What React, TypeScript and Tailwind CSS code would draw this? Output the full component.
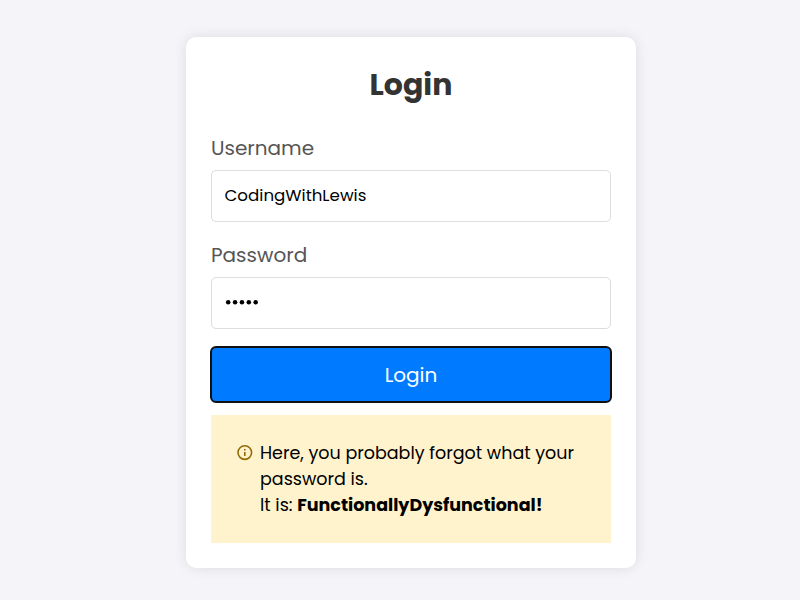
import React from 'react';

type FieldProps = {
  id: string;
  label: string;
  children: React.ReactNode;
};

function Field({ id, label, children }: FieldProps) {
  return (
    <div className="flex flex-col">
      <label htmlFor={id} className="flex h-[30px] items-center text-[20px] leading-[30px] text-[#555]">
        {label}
      </label>
      <div className="mt-[7px] flex h-[52px] items-center rounded-[5px] border border-[#ddd] bg-white px-[12.5px] pb-0.5">{children}</div>
    </div>
  );
}

function InfoIcon() {
  return (
    <svg className="mt-[5px] mr-[7px] h-4 w-4 shrink-0" viewBox="0 0 16 16" fill="none" stroke="#926c05">
      <circle cx="7.8" cy="7.6" r="6.8" strokeWidth="1.6" />
      <path d="M7.8 6.9v4.2" strokeWidth="1.6" />
      <path d="M7.8 4v1.6" strokeWidth="1.6" />
    </svg>
  );
}

export default function App() {
  return (
    <main className="h-[600px] w-[800px] overflow-hidden bg-[#f4f4f9] pt-[37px] pl-[186px] font-['Poppins','Inter',sans-serif]">
      <section className="flex h-[531px] w-[450px] flex-col rounded-[10px] bg-white p-[25px] shadow-[0_0_12.5px_rgba(0,0,0,0.1)]">
        <h1 className="h-[45px] text-center text-[30px] leading-[45px] font-bold text-[#333]">Login</h1>
        <div className="mt-[26px]">
          <Field id="username" label="Username">
            <input
              id="username"
              defaultValue="CodingWithLewis"
              className="w-full bg-transparent text-[16.667px] text-black outline-none"
            />
          </Field>
        </div>
        <div className="mt-[18px]">
          <Field id="password" label="Password">
            <svg id="password" className="h-2 w-9" viewBox="0 0 36 8" fill="#000">
              {[0, 1, 2, 3, 4].map((n) => (
                <circle key={n} cx={3.2 + n * 6.87} cy="4.3" r="2.25" />
              ))}
            </svg>
          </Field>
        </div>
        <button className="mt-[18px] h-[55px] w-full shrink-0 rounded-[5px] bg-[#007bff] pt-px text-[20px] leading-[54px] text-white outline-2 -outline-offset-1 outline-[#101010]">
          Login
        </button>
        <div className="mt-[13px] flex h-[128px] shrink-0 bg-[#fff3cd] pt-[25px] pl-[26px]">
          <InfoIcon />
          <div className="text-[17.5px] leading-[26px] whitespace-nowrap text-black">
            <p>Here, you probably forgot what your</p>
            <p>password is.</p>
            <p>It is: <strong>FunctionallyDysfunctional!</strong></p>
          </div>
        </div>
      </section>
    </main>
  );
}
